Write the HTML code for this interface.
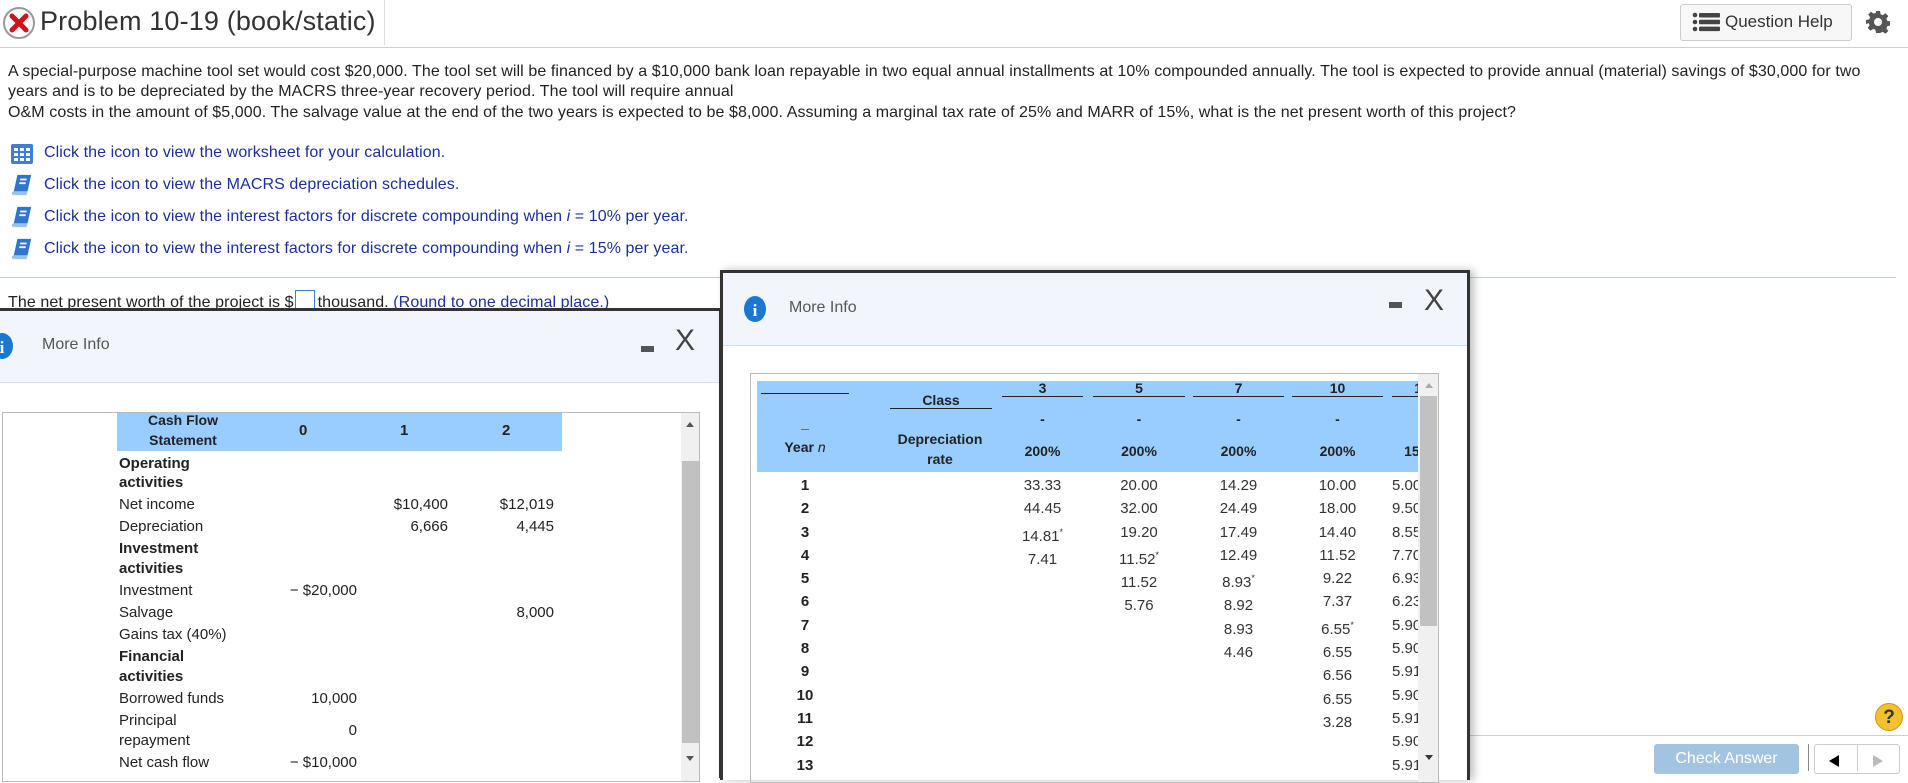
<!DOCTYPE html>
<html><head><meta charset="utf-8"><style>
*{margin:0;padding:0;box-sizing:border-box}
body{width:1908px;height:771px;overflow:hidden;background:#fff;font-family:"Liberation Sans",Arial,sans-serif;color:#222;position:relative}
.a{position:absolute;white-space:nowrap}
.p{font-size:16px;color:#222;letter-spacing:0.09px}
.lk{font-size:16px;color:#1c2f9c;letter-spacing:0.08px}
.ic{position:absolute;left:11px;width:22px;height:22px}
.r{position:absolute;font-size:15px;line-height:18px;white-space:nowrap}
.lb{left:116px}
.c0{left:200px;width:154px;text-align:right}
.c1{left:300px;width:145px;text-align:right}
.c2{left:400px;width:151px;text-align:right}
</style></head><body>
<!-- header -->
<svg class="a" style="left:2px;top:6px" width="34" height="34" viewBox="0 0 34 34"><circle cx="17" cy="17" r="15" fill="#fff" stroke="#999" stroke-width="2"/><path d="M10 10 L24 24 M24 10 L10 24" stroke="#d0121b" stroke-width="5" stroke-linecap="round"/></svg>
<div class="a" style="left:40px;top:6px;font-size:27px;color:#333;letter-spacing:0.15px">Problem 10-19 (book/static)</div>
<div class="a" style="left:384px;top:0;width:1px;height:45px;background:#ddd"></div>
<div class="a" style="left:0;top:47px;width:1908px;height:1px;background:#c8d0dc"></div>
<div class="a" style="left:1680px;top:4px;width:172px;height:37px;border:1px solid #ccc;border-radius:3px;background:#f7f7f7"></div>
<svg class="a" style="left:1692px;top:12px" width="30" height="20" viewBox="0 0 30 20"><g fill="#444"><circle cx="3" cy="3" r="2.3"/><circle cx="3" cy="10" r="2.3"/><circle cx="3" cy="17" r="2.3"/><rect x="7" y="1" width="21" height="4.5" rx="1"/><rect x="7" y="7.8" width="21" height="4.5" rx="1"/><rect x="7" y="14.6" width="21" height="4.5" rx="1"/></g></svg>
<div class="a" style="left:1725px;top:12px;font-size:17px;color:#333">Question Help</div>
<svg class="a" style="left:1866px;top:10px" width="24" height="24" viewBox="0 0 24 24"><path fill="#555" d="M10 1h4l.6 3.2 2.2.9 2.7-1.9 2.8 2.8-1.9 2.7.9 2.2 3.2.6v4l-3.2.6-.9 2.2 1.9 2.7-2.8 2.8-2.7-1.9-2.2.9L14 23h-4l-.6-3.2-2.2-.9-2.7 1.9-2.8-2.8 1.9-2.7-.9-2.2L0 14v-4l3.2-.6.9-2.2-1.9-2.7 2.8-2.8 2.7 1.9 2.2-.9z"/><circle cx="12" cy="12" r="4" fill="#fff"/></svg>
<!-- paragraph -->
<div class="a p" style="left:8px;top:63px">A special-purpose machine tool set would cost $20,000. The tool set will be financed by a $10,000 bank loan repayable in two equal annual installments at 10% compounded annually. The tool is expected to provide annual (material) savings of $30,000 for two</div>
<div class="a p" style="left:8px;top:83px">years and is to be depreciated by the MACRS three-year recovery period. The tool will require annual</div>
<div class="a p" style="left:8px;top:104px">O&amp;M costs in the amount of $5,000. The salvage value at the end of the two years is expected to be $8,000. Assuming a marginal tax rate of 25% and MARR of 15%, what is the net present worth of this project?</div>
<!-- links -->
<svg class="ic" style="top:143px" viewBox="0 0 22 22"><rect x="0" y="1" width="22" height="20" rx="2" fill="#3b7fd8"/><g fill="#fff"><rect x="3" y="5" width="4" height="3"/><rect x="9" y="5" width="4" height="3"/><rect x="15" y="5" width="4" height="3"/><rect x="3" y="10" width="4" height="3"/><rect x="9" y="10" width="4" height="3"/><rect x="15" y="10" width="4" height="3"/><rect x="3" y="15" width="4" height="3"/><rect x="9" y="15" width="4" height="3"/><rect x="15" y="15" width="4" height="3"/></g></svg>
<div class="a lk" style="left:44px;top:144px">Click the icon to view the worksheet for your calculation.</div>
<svg class="ic" style="top:174px" viewBox="0 0 22 24"><path d="M6 1h15l-4 18H2z" fill="#2f74d0"/><path d="M2 19h15l-1 4H2a2 2 0 0 1 0-4z" fill="#9cc3ee"/><path d="M9 6h7M8 10h7" stroke="#fff" stroke-width="2"/></svg>
<div class="a lk" style="left:44px;top:176px">Click the icon to view the MACRS depreciation schedules.</div>
<svg class="ic" style="top:206px" viewBox="0 0 22 24"><path d="M6 1h15l-4 18H2z" fill="#2f74d0"/><path d="M2 19h15l-1 4H2a2 2 0 0 1 0-4z" fill="#9cc3ee"/><path d="M9 6h7M8 10h7" stroke="#fff" stroke-width="2"/></svg>
<div class="a lk" style="left:44px;top:208px">Click the icon to view the interest factors for discrete compounding when <i>i</i> = 10% per year.</div>
<svg class="ic" style="top:238px" viewBox="0 0 22 24"><path d="M6 1h15l-4 18H2z" fill="#2f74d0"/><path d="M2 19h15l-1 4H2a2 2 0 0 1 0-4z" fill="#9cc3ee"/><path d="M9 6h7M8 10h7" stroke="#fff" stroke-width="2"/></svg>
<div class="a lk" style="left:44px;top:240px">Click the icon to view the interest factors for discrete compounding when <i>i</i> = 15% per year.</div>
<div class="a" style="left:0;top:277px;width:1896px;height:1px;background:#c8d0dc"></div>
<div class="a p" style="left:8px;top:290px">The net present worth of the project is $<span style="display:inline-block;width:20px;height:22px;border:1px solid #3b7fd8;vertical-align:-5px;margin:0 3px 0 1px"></span>thousand. <span style="color:#1c2f9c">(Round to one decimal place.)</span></div>
<!-- bottom right -->
<div class="a" style="left:1468px;top:735px;width:440px;height:1px;background:#ccd"></div>
<div class="a" style="left:1875px;top:703px;width:28px;height:28px;border-radius:50%;background:#f2c22e;border:1px solid #c99a10;text-align:center;font:bold 19px/27px 'Liberation Sans';color:#333">?</div>
<div class="a" style="left:1654px;top:744px;width:145px;height:30px;background:#a3c4e0;border-radius:3px;color:#fff;font-size:16px;text-align:center;line-height:30px">Check Answer</div>
<div class="a" style="left:1808px;top:744px;width:1px;height:27px;background:#888"></div>
<div class="a" style="left:1814px;top:744px;width:86px;height:30px;border:1px solid #ccc;border-radius:3px"></div>
<div class="a" style="left:1857px;top:744px;width:1px;height:27px;background:#ccc"></div>
<div class="a" style="left:1829px;top:755px;width:0;height:0;border-top:6px solid transparent;border-bottom:6px solid transparent;border-right:10px solid #000"></div>
<div class="a" style="left:1873px;top:755px;width:0;height:0;border-top:6px solid transparent;border-bottom:6px solid transparent;border-left:10px solid #bbb"></div>
<!-- left modal -->
<div class="a" style="left:0;top:308px;width:722px;height:470px;background:#fff;border-top:3px solid #333;border-right:3px solid #333"></div>
<div class="a" style="left:0;top:311px;width:719px;height:72px;background:#f2f6fc;border-bottom:1px solid #cfe0f2"></div>
<svg class="a" style="left:-9px;top:333px" width="22" height="26" viewBox="0 0 22 26"><ellipse cx="11" cy="13" rx="11" ry="13" fill="#1b78d0"/><text x="11" y="20" font-family="Liberation Serif" font-weight="bold" font-size="17" fill="#fff" text-anchor="middle">i</text></svg>
<div class="a" style="left:42px;top:336px;font-size:16px;color:#555">More Info</div>
<div class="a" style="left:641px;top:346px;width:13px;height:6px;background:#555"></div>
<div class="a" style="left:675px;top:324px;font-size:30px;color:#444">X</div>
<div class="a" style="left:2px;top:412px;width:698px;height:370px;border:1px solid #bbb;overflow:hidden">
 <div class="a" style="left:114px;top:0;width:445px;height:38px;background:#99ccff"></div>
 <div class="a" style="left:678px;top:0;width:19px;height:370px;background:#f0f0f0"></div>
 <div class="a" style="left:679px;top:48px;width:17px;height:282px;background:#c1c1c1"></div>
 <div class="a" style="left:683px;top:9px;border-left:4px solid transparent;border-right:4px solid transparent;border-bottom:5px solid #555"></div>
 <div class="a" style="left:683px;top:343px;border-left:4px solid transparent;border-right:4px solid transparent;border-top:5px solid #555"></div>
 <div class="a" style="left:116px;top:-3px;width:128px;text-align:center;font-size:14px;font-weight:bold;line-height:20px;color:#222;white-space:normal">Cash Flow<br>Statement</div>
 <div class="a" style="left:296px;top:9px;font-size:15px;font-weight:bold">0</div>
 <div class="a" style="left:397px;top:9px;font-size:15px;font-weight:bold">1</div>
 <div class="a" style="left:499px;top:9px;font-size:15px;font-weight:bold">2</div>
 <div class="r lb" style="top:42px;font-weight:bold">Operating</div>
 <div class="r lb" style="top:61px;font-weight:bold">activities</div>
 <div class="r lb" style="top:83px">Net income</div>
 <div class="r lb" style="top:105px">Depreciation</div>
 <div class="r lb" style="top:127px;font-weight:bold">Investment</div>
 <div class="r lb" style="top:147px;font-weight:bold">activities</div>
 <div class="r lb" style="top:169px">Investment</div>
 <div class="r lb" style="top:191px">Salvage</div>
 <div class="r lb" style="top:213px">Gains tax (40%)</div>
 <div class="r lb" style="top:235px;font-weight:bold">Financial</div>
 <div class="r lb" style="top:255px;font-weight:bold">activities</div>
 <div class="r lb" style="top:277px">Borrowed funds</div>
 <div class="r lb" style="top:299px">Principal</div>
 <div class="r lb" style="top:319px">repayment</div>
 <div class="r lb" style="top:341px">Net cash flow</div>
 <div class="r c1" style="top:83px">$10,400</div>
 <div class="r c2" style="top:83px">$12,019</div>
 <div class="r c1" style="top:105px">6,666</div>
 <div class="r c2" style="top:105px">4,445</div>
 <div class="r c0" style="top:169px">&#8722; $20,000</div>
 <div class="r c2" style="top:191px">8,000</div>
 <div class="r c0" style="top:277px">10,000</div>
 <div class="r c0" style="top:309px">0</div>
 <div class="r c0" style="top:341px">&#8722; $10,000</div>
</div>
<!-- right modal -->
<div class="a" style="left:720px;top:270px;width:750px;height:510px;background:#fff;border:3px solid #333;border-bottom:none;box-shadow:4px 0 8px rgba(0,0,0,.25)"></div>
<div class="a" style="left:723px;top:273px;width:744px;height:73px;background:#f2f6fc;border-bottom:1px solid #cfe0f2"></div>
<svg class="a" style="left:744px;top:296px" width="22" height="26" viewBox="0 0 22 26"><ellipse cx="11" cy="13" rx="11" ry="13" fill="#1b78d0"/><text x="11" y="20" font-family="Liberation Serif" font-weight="bold" font-size="17" fill="#fff" text-anchor="middle">i</text></svg>
<div class="a" style="left:789px;top:299px;font-size:16px;color:#555">More Info</div>
<div class="a" style="left:1389px;top:302px;width:13px;height:6px;background:#555"></div>
<div class="a" style="left:1424px;top:284px;font-size:30px;color:#444">X</div>
<div class="a" style="left:750px;top:373px;width:689px;height:410px;border:1px solid #bbb;overflow:hidden;font-size:15px">
 <div class="a" style="left:6px;top:7px;width:661px;height:91px;background:#99ccff"></div>
 <div class="a" style="left:667px;top:0;width:20px;height:410px;background:#f0f0f0"></div>
 <div class="a" style="left:669px;top:22px;width:17px;height:230px;background:#c1c1c1"></div>
 <div class="a" style="left:674px;top:9px;border-left:4px solid transparent;border-right:4px solid transparent;border-bottom:5px solid #aaa"></div>
 <div class="a" style="left:674px;top:381px;border-left:4px solid transparent;border-right:4px solid transparent;border-top:5px solid #333"></div>
 <div class="a" style="left:6px;top:7px;width:661px;height:91px;overflow:hidden;font-weight:bold;font-size:14px">
  <div class="a" style="left:4px;top:12px;width:88px;border-bottom:1px solid #222"></div>
  <div class="a" style="left:133px;top:11px;width:102px;border-bottom:1px solid #222;text-align:center">Class</div>
  <div class="a" style="left:4px;top:34px;width:88px;text-align:center">_</div>
  <div class="a" style="left:4px;top:58px;width:88px;text-align:center">Year <i style="font-weight:normal">n</i></div>
  <div class="a" style="left:128px;top:48px;width:110px;text-align:center;line-height:20px">Depreciation<br>rate</div>
  <div class="a" style="left:245px;top:-1px;width:81px;border-bottom:1px solid #222;text-align:center">3</div>
  <div class="a" style="left:336px;top:-1px;width:92px;border-bottom:1px solid #222;text-align:center">5</div>
  <div class="a" style="left:436px;top:-1px;width:91px;border-bottom:1px solid #222;text-align:center">7</div>
  <div class="a" style="left:535px;top:-1px;width:91px;border-bottom:1px solid #222;text-align:center">10</div>
  <div class="a" style="left:635px;top:-1px;width:60px;border-bottom:1px solid #222;text-align:center">15</div>
  <div class="a" style="left:245px;top:30px;width:81px;text-align:center">-<br><br>200%</div>
  <div class="a" style="left:336px;top:30px;width:92px;text-align:center">-<br><br>200%</div>
  <div class="a" style="left:436px;top:30px;width:91px;text-align:center">-<br><br>200%</div>
  <div class="a" style="left:535px;top:30px;width:91px;text-align:center">-<br><br>200%</div>
  <div class="a" style="left:635px;top:30px;width:60px;text-align:center">-<br><br>150%</div>
 </div>
 <div class="a" style="left:10px;top:100px;width:88px;text-align:center;font-weight:bold;line-height:23.3px">1<br>2<br>3<br>4<br>5<br>6<br>7<br>8<br>9<br>10<br>11<br>12<br>13</div>
 <div class="a" style="left:251px;top:100px;width:81px;text-align:center;line-height:23.3px;color:#333">33.33<br>44.45<br>14.81<sup style="font-size:9px">*</sup><br>7.41</div>
 <div class="a" style="left:342px;top:100px;width:92px;text-align:center;line-height:23.3px;color:#333">20.00<br>32.00<br>19.20<br>11.52<sup style="font-size:9px">*</sup><br>11.52<br>5.76</div>
 <div class="a" style="left:442px;top:100px;width:91px;text-align:center;line-height:23.3px;color:#333">14.29<br>24.49<br>17.49<br>12.49<br>8.93<sup style="font-size:9px">*</sup><br>8.92<br>8.93<br>4.46</div>
 <div class="a" style="left:541px;top:100px;width:91px;text-align:center;line-height:23.3px;color:#333">10.00<br>18.00<br>14.40<br>11.52<br>9.22<br>7.37<br>6.55<sup style="font-size:9px">*</sup><br>6.55<br>6.56<br>6.55<br>3.28</div>
 <div class="a" style="left:641px;top:100px;width:26px;overflow:hidden;line-height:23.3px;color:#333;white-space:pre">5.00
9.50
8.55
7.70
6.93
6.23
5.90
5.90
5.91
5.90
5.91
5.90
5.91</div>
</div>
</body></html>
